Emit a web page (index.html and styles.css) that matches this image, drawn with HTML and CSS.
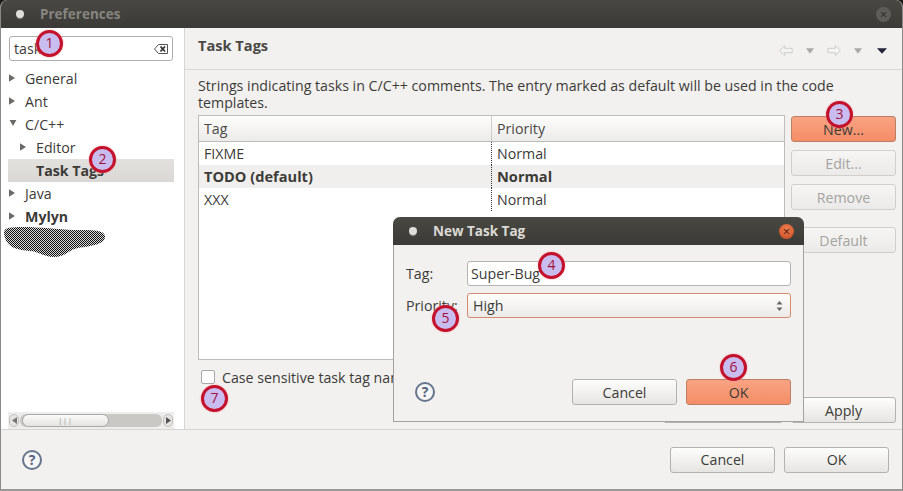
FILE: index.html
```html
<!DOCTYPE html>
<html lang="en">
<head>
<meta charset="utf-8">
<title>Preferences</title>
<link rel="stylesheet" href="styles.css">
</head>
<body>
<svg class="defs" width="0" height="0" aria-hidden="true">
  <defs>
    <pattern id="checker" width="2" height="2" patternUnits="userSpaceOnUse">
      <rect width="2" height="2" fill="#d8d8d8"/>
      <rect width="1" height="1" fill="#111"/>
      <rect x="1" y="1" width="1" height="1" fill="#111"/>
    </pattern>
  </defs>
</svg>
<div class="window">
  <header class="titlebar">
    <span class="wm-dot"></span>
    <span class="title-text">Preferences</span>
    <span class="wm-close">×</span>
  </header>
  <div class="main">
    <aside class="sidebar">
      <div class="search">
        <span class="search-text">task</span>
        <svg class="search-clear" width="14" height="10" viewBox="0 0 14 10"><path d="M4.5.5H13.5V9.5H4.5L.5 5Z" fill="#fff" stroke="#555" stroke-width="1"/><path d="M6.5 2.5 11 7.5M11 2.5 6.5 7.5" stroke="#333" stroke-width="1.8"/></svg>
      </div>
      <ul class="tree">
        <li class="node"><svg class="tw" width="6" height="8" viewBox="0 0 7 9"><path d="M0 0 7 4.5 0 9Z"/></svg>General</li>
        <li class="node"><svg class="tw" width="6" height="8" viewBox="0 0 7 9"><path d="M0 0 7 4.5 0 9Z"/></svg>Ant</li>
        <li class="node"><svg class="tw" width="8" height="6" viewBox="0 0 8 7"><path d="M0 0H8L4 7Z"/></svg>C/C++</li>
        <li class="node lvl2"><svg class="tw" width="6" height="8" viewBox="0 0 7 9"><path d="M0 0 7 4.5 0 9Z"/></svg>Editor</li>
        <li class="node lvl2 selected">Task Tags</li>
        <li class="node"><svg class="tw" width="6" height="8" viewBox="0 0 7 9"><path d="M0 0 7 4.5 0 9Z"/></svg>Java</li>
        <li class="node strong"><svg class="tw" width="6" height="8" viewBox="0 0 7 9"><path d="M0 0 7 4.5 0 9Z"/></svg>Mylyn</li>
      </ul>
      <svg class="smudge" width="102" height="32" viewBox="0 0 102 32"><path d="M4 2C20-1 50 3 70 4 84 4 100 3 101 10 102 18 88 20 74 22 64 24 62 31 50 31 40 31 36 26 26 25 14 24 4 22 1 12-1 6 0 3 4 2Z" fill="url(#checker)"/></svg>
      <div class="hscroll">
        <span class="sb-end"><svg width="5" height="7" viewBox="0 0 5 7"><path d="M5 0V7L0 3.5Z" fill="#777"/></svg></span>
        <div class="sb-track"><div class="sb-thumb">|||</div></div>
        <span class="sb-end"><svg width="5" height="7" viewBox="0 0 5 7"><path d="M0 0V7L5 3.5Z" fill="#555"/></svg></span>
      </div>
    </aside>
    <section class="content">
      <div class="page-head">
        <h1 class="page-title">Task Tags</h1>
        <div class="nav-icons">
          <svg width="14" height="13" viewBox="0 0 16 13"><path d="M.7 6.5 6.5 1V4H15V9H6.5V12Z" fill="#f4f4f3" stroke="#c8c7c4"/></svg>
          <svg class="caret" width="8" height="6" viewBox="0 0 9 6"><path d="M0 0H9L4.5 6Z" fill="#aaa9a6"/></svg>
          <svg width="14" height="13" viewBox="0 0 16 13"><path d="M15.3 6.5 9.500 1V4H1V9H9.500V12Z" fill="#f4f4f3" stroke="#c8c7c4"/></svg>
          <svg class="caret" width="8" height="6" viewBox="0 0 9 6"><path d="M0 0H9L4.5 6Z" fill="#aaa9a6"/></svg>
          <svg class="caret-menu" width="10" height="6" viewBox="0 0 11 6"><path d="M0 0H11L5.500 6Z" fill="#23233a"/></svg>
        </div>
      </div>
      <div class="page-body">
        <p class="desc">Strings indicating tasks in C/C++ comments. The entry marked as default will be used in the code templates.</p>
        <div class="editor">
          <div class="left-col">
            <div class="table">
              <div class="thead">
                <div class="th col-tag">Tag</div>
                <div class="th col-pri">Priority</div>
              </div>
              <div class="tr"><div class="td col-tag">FIXME</div><div class="td col-pri">Normal</div></div>
              <div class="tr tr-default"><div class="td col-tag">TODO (default)</div><div class="td col-pri">Normal</div></div>
              <div class="tr"><div class="td col-tag">XXX</div><div class="td col-pri">Normal</div></div>
            </div>
            <label class="check-row"><span class="checkbox"></span>Case sensitive task tag names</label>
          </div>
          <div class="side-buttons">
            <button class="btn primary">New...</button>
            <button class="btn disabled">Edit...</button>
            <button class="btn disabled">Remove</button>
            <button class="btn disabled gap-top">Default</button>
          </div>
        </div>
        <div class="apply-row">
          <button class="btn restore">Restore Defaults</button>
          <button class="btn">Apply</button>
        </div>
      </div>
    </section>
  </div>
  <footer class="footer">
    <span class="help">?</span>
    <div class="footer-buttons">
      <button class="btn">Cancel</button>
      <button class="btn">OK</button>
    </div>
  </footer>
</div>

<div class="dialog">
  <header class="dlg-title">
    <span class="wm-dot"></span>
    <span class="dlg-title-text">New Task Tag</span>
    <span class="wm-close active">×</span>
  </header>
  <div class="dlg-body">
    <div class="field">
      <span class="field-label">Tag:</span>
      <div class="input">Super-Bug</div>
    </div>
    <div class="field">
      <span class="field-label">Priority:</span>
      <div class="select">High
        <svg class="spin" width="7" height="14" viewBox="0 0 7 14"><path d="M3.500 2 6.500 5.500H.5ZM3.500 12 .5 8.500H6.500Z" fill="#666"/></svg>
      </div>
    </div>
    <div class="dlg-actions">
      <span class="help">?</span>
      <button class="btn">Cancel</button>
      <button class="btn primary">OK</button>
    </div>
  </div>
</div>

<span class="callout c1">1</span>
<span class="callout c2">2</span>
<span class="callout c3">3</span>
<span class="callout c4">4</span>
<span class="callout c5">5</span>
<span class="callout c6">6</span>
<span class="callout c7">7</span>
</body>
</html>
```
FILE: styles.css
```css
* { box-sizing: border-box; }
html, body { margin: 0; padding: 0; }
body {
  position: relative;
  width: 903px;
  height: 491px;
  overflow: hidden;
  background: #1a1a18;
  font-family: "Open Sans", "Noto Sans", sans-serif;
  font-size: 14.2px;
  color: #3c3b37;
}
.defs { position: absolute; }
.window {
  width: 903px;
  height: 491px;
  display: flex;
  flex-direction: column;
  background: #f2f1f0;
  border-radius: 7px 7px 0 0;
  border-left: 1px solid #8a8987;
  border-right: 1px solid #8a8987;
  border-bottom: 2px solid #9a9997;
  overflow: hidden;
}
.titlebar {
  height: 28px;
  flex: none;
  margin: 0 -1px;
  display: flex;
  align-items: center;
  padding: 0 12px 0 16px;
  background: linear-gradient(#4a4843, #3b3a36);
}
.wm-dot {
  width: 8px;
  height: 8px;
  flex: none;
  border-radius: 50%;
  background: #dfdedb;
  box-shadow: 0 2px 1px -1px #8f8d88;
}
.title-text {
  margin-left: 16px;
  font-weight: 700;
  font-size: 13.5px;
  color: #87857f;
}
.wm-close {
  margin-left: auto;
  width: 15px;
  height: 15px;
  border-radius: 50%;
  background: #5f5d59;
  color: #2c2b28;
  font-size: 13px;
  line-height: 14px;
  text-align: center;
}
.wm-close.active {
  background: radial-gradient(circle at 50% 35%, #f08050, #c8481f);
  color: #4a1a0a;
}
.main { flex: none; height: 402px; display: flex; border-bottom: 1px solid #d6d5d2; }
.sidebar {
  position: relative;
  width: 184px;
  flex: none;
  padding: 8px 10px 0 7px;
  display: flex;
  flex-direction: column;
  background: #fff;
  border-right: 1px solid #d6d5d2;
}
.search {
  height: 25px;
  margin: 0 1px;
  flex: none;
  display: flex;
  align-items: center;
  justify-content: space-between;
  padding: 0 4px;
  background: #fff;
  border: 1px solid #b0aeaa;
  border-radius: 3px;
}
.search-clear { flex: none; }
.tree { list-style: none; margin: 6px 0 0; padding: 0; flex: 1; }
.node {
  height: 23px;
  line-height: 23px;
  padding-left: 17px;
  position: relative;
  white-space: nowrap;
}
.tw { position: absolute; left: 1px; top: 7px; fill: #6b6a66; }
.lvl2 { padding-left: 28px; }
.lvl2 .tw { left: 12px; }
.selected {
  font-weight: 700;
  background: linear-gradient(#e2e1de, #d9d8d5);
}
.strong { font-weight: 700; }
.smudge { position: absolute; left: 3px; top: 198px; }
.hscroll {
  height: 17px;
  flex: none;
  display: flex;
  align-items: center;
  gap: 1px;
  padding: 0 1px;
  background: #eeedeb;
}
.sb-end {
  width: 10px;
  height: 13px;
  flex: none;
  display: flex;
  align-items: center;
  justify-content: center;
  background: #e6e5e3;
  border: 1px solid #c0bfbc;
  border-radius: 6px;
}
.sb-track {
  flex: 1;
  height: 13px;
  background: #c9c8c5;
  border-radius: 6px;
}
.sb-thumb {
  width: 87px;
  height: 13px;
  margin-left: 2px;
  background: linear-gradient(#fbfbfa, #e4e3e0);
  border: 1px solid #a9a8a5;
  border-radius: 7px;
  font-size: 7px;
  line-height: 11px;
  text-align: center;
  letter-spacing: 1px;
  color: #888;
}
.content { flex: 1; display: flex; flex-direction: column; min-width: 0; }
.page-head {
  height: 42px;
  flex: none;
  display: flex;
  align-items: center;
  justify-content: space-between;
  padding: 0 15px 7px 13px;
  border-bottom: 1px solid #d9d8d5;
}
.page-title { margin: 0; font-size: 14.6px; font-weight: 700; color: #4a4945; }
.nav-icons { display: flex; align-items: center; gap: 13px; margin-top: 11px; }
.caret-menu { margin-left: 2px; }
.page-body {
  flex: 1;
  min-height: 0;
  display: flex;
  flex-direction: column;
  padding: 7px 6px 6px 13px;
}
.desc { margin: 0; line-height: 17px; height: 38px; width: 660px; }
.editor { flex: 1; display: flex; gap: 6px; min-height: 0; }
.left-col { width: 587px; flex: none; display: flex; flex-direction: column; }
.table {
  height: 245px;
  flex: none;
  background: #fff;
  border: 1px solid #bdbcb9;
}
.thead {
  height: 26px;
  display: flex;
  background: linear-gradient(#fdfdfc, #ecebe9);
  border-bottom: 1px solid #bdbcb9;
}
.th { line-height: 25px; padding-left: 5px; color: #4a4945; }
.col-tag { width: 292px; flex: none; }
.col-pri { flex: 1; border-left: 1px solid #cfcecb; padding-left: 5px; }
.tr { height: 23px; display: flex; }
.td { line-height: 24px; padding-left: 5px; }
.td.col-pri { border-left: 1px dotted #333; }
.tr-default { background: #f0efee; font-weight: 700; font-size: 14.6px; }
.tr-default .td { line-height: 23px; }
.check-row { display: flex; align-items: center; margin-top: 9px; padding-left: 3px; height: 16px; white-space: nowrap; }
.checkbox {
  width: 14px;
  height: 14px;
  margin-right: 7px;
  background: #fff;
  border: 1px solid #a9a8a5;
  border-radius: 2px;
}
.side-buttons { width: 105px; flex: none; display: flex; flex-direction: column; gap: 8px; padding-top: 1px; }
.btn {
  height: 26px;
  width: 105px;
  flex: none;
  padding: 0;
  font: inherit;
  color: #3c3b37;
  background: linear-gradient(#fdfdfc, #e6e5e2);
  border: 1px solid #b3b2ae;
  border-radius: 3px;
}
.primary {
  background: linear-gradient(#f9a383, #f48d66);
  border-color: #bb7f64;
}
.disabled { color: #a5a4a0; background: linear-gradient(#f6f5f4, #ebeae8); border-color: #d0cfcc; }
.gap-top { margin-top: 9px; }
.apply-row { display: flex; justify-content: flex-end; gap: 8px; flex: none; }
.restore { width: 120px; }
.footer {
  flex: 1;
  display: flex;
  align-items: center;
  justify-content: space-between;
  padding: 0 13px 0 21px;
}
.footer-buttons { display: flex; gap: 9px; }
.help {
  width: 20px;
  height: 20px;
  flex: none;
  border-radius: 50%;
  border: 2px solid #66758c;
  background: #f6f6f6;
  color: #55647c;
  font-weight: 700;
  font-size: 14px;
  line-height: 16px;
  text-align: center;
}
.dialog {
  position: absolute;
  left: 393px;
  top: 217px;
  width: 411px;
  height: 205px;
  display: flex;
  flex-direction: column;
  background: #f2f1f0;
  border-radius: 7px 7px 0 0;
  border: 1px solid #a3a2a0;
  border-top: 0;
}
.dlg-title {
  height: 28px;
  flex: none;
  margin: 0 -1px;
  display: flex;
  align-items: center;
  padding: 0 10px 0 16px;
  border-radius: 7px 7px 0 0;
  background: linear-gradient(#4a4843, #3b3a36);
}
.dlg-title-text { margin-left: 16px; font-weight: 700; font-size: 13.5px; color: #dcdad5; }
.dlg-body { flex: 1; display: flex; flex-direction: column; padding: 16px 12px 16px 12px; }
.field { display: flex; align-items: center; height: 25px; margin-bottom: 7px; }
.field-label { width: 61px; flex: none; }
.input {
  flex: 1;
  height: 25px;
  line-height: 23px;
  padding-left: 3px;
  background: #fff;
  border: 1px solid #b5b4b0;
  border-radius: 3px;
}
.select {
  flex: 1;
  height: 25px;
  line-height: 23px;
  padding-left: 5px;
  position: relative;
  background: linear-gradient(#fdfdfc, #ebeae8);
  border: 1px solid #d58b6c;
  border-radius: 3px;
}
.spin { position: absolute; right: 7px; top: 5px; }
.dlg-actions { margin-top: auto; display: flex; align-items: center; gap: 9px; }
.dlg-actions .help { margin: 0 auto 0 9px; }
.callout {
  position: absolute;
  width: 27px;
  height: 27px;
  border-radius: 50%;
  background: #c9bdf0;
  border: 3px solid #c4122d;
  box-shadow: 0 0 2px #f3a0a0;
  color: #a3123c;
  font-size: 14px;
  line-height: 20px;
  text-align: center;
}
.c1 { left: 36px; top: 30px; }
.c2 { left: 89px; top: 146px; }
.c3 { left: 826px; top: 101px; }
.c4 { left: 538px; top: 252px; }
.c5 { left: 432px; top: 305px; }
.c6 { left: 720px; top: 354px; }
.c7 { left: 201px; top: 385px; }
```
